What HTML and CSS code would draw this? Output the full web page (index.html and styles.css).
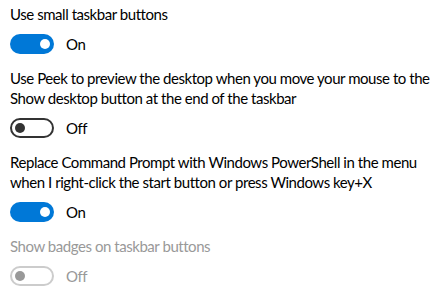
FILE: index.html
```html
<!DOCTYPE html>
<html>
<head>
<meta charset="utf-8">
<link rel="stylesheet" href="styles.css">
</head>
<body>
<div class="settings">
  <div class="setting">
    <div class="label">Use small taskbar buttons</div>
    <div class="toggle-row">
      <span class="toggle on"><span class="knob"></span></span>
      <span class="state">On</span>
    </div>
  </div>
  <div class="setting">
    <div class="label">Use Peek to preview the desktop when you move your mouse to the<br>Show desktop button at the end of the taskbar</div>
    <div class="toggle-row">
      <span class="toggle off"><span class="knob"></span></span>
      <span class="state">Off</span>
    </div>
  </div>
  <div class="setting">
    <div class="label">Replace Command Prompt with Windows PowerShell in the menu<br>when I right-click the start button or press Windows key+X</div>
    <div class="toggle-row">
      <span class="toggle on"><span class="knob"></span></span>
      <span class="state">On</span>
    </div>
  </div>
  <div class="setting disabled">
    <div class="label">Show badges on taskbar buttons</div>
    <div class="toggle-row">
      <span class="toggle off"><span class="knob"></span></span>
      <span class="state">Off</span>
    </div>
  </div>
</div>
</body>
</html>
```
FILE: styles.css
```css
html, body {
  margin: 0;
  padding: 0;
  background: #ffffff;
}
body {
  font-family: Lato, "Noto Sans", sans-serif;
  font-size: 15px;
  letter-spacing: -0.45px;
  color: #000000;
}
.settings {
  display: flex;
  flex-direction: column;
  gap: 14px;
  padding: 4px 10px 0 10px;
}
.setting {
  display: flex;
  flex-direction: column;
  gap: 10px;
}
.label {
  line-height: 20px;
  white-space: nowrap;
}
.toggle-row {
  display: flex;
  align-items: center;
  gap: 12px;
  height: 20px;
}
.toggle {
  box-sizing: border-box;
  width: 44px;
  height: 20px;
  border-radius: 10px;
  display: flex;
  align-items: center;
  padding: 0 4px;
}
.toggle.on {
  background: #0078d7;
  justify-content: flex-end;
}
.toggle.off {
  border: 2px solid #333333;
  background: #ffffff;
  padding: 0 3px;
}
.knob {
  width: 10px;
  height: 10px;
  border-radius: 50%;
  background: #ffffff;
}
.toggle.off .knob {
  background: #333333;
}
.state {
  line-height: 20px;
}
.disabled .label,
.disabled .state {
  color: #999999;
}
.disabled .toggle.off {
  border-color: #cccccc;
}
.disabled .toggle.off .knob {
  background: #999999;
}
```
